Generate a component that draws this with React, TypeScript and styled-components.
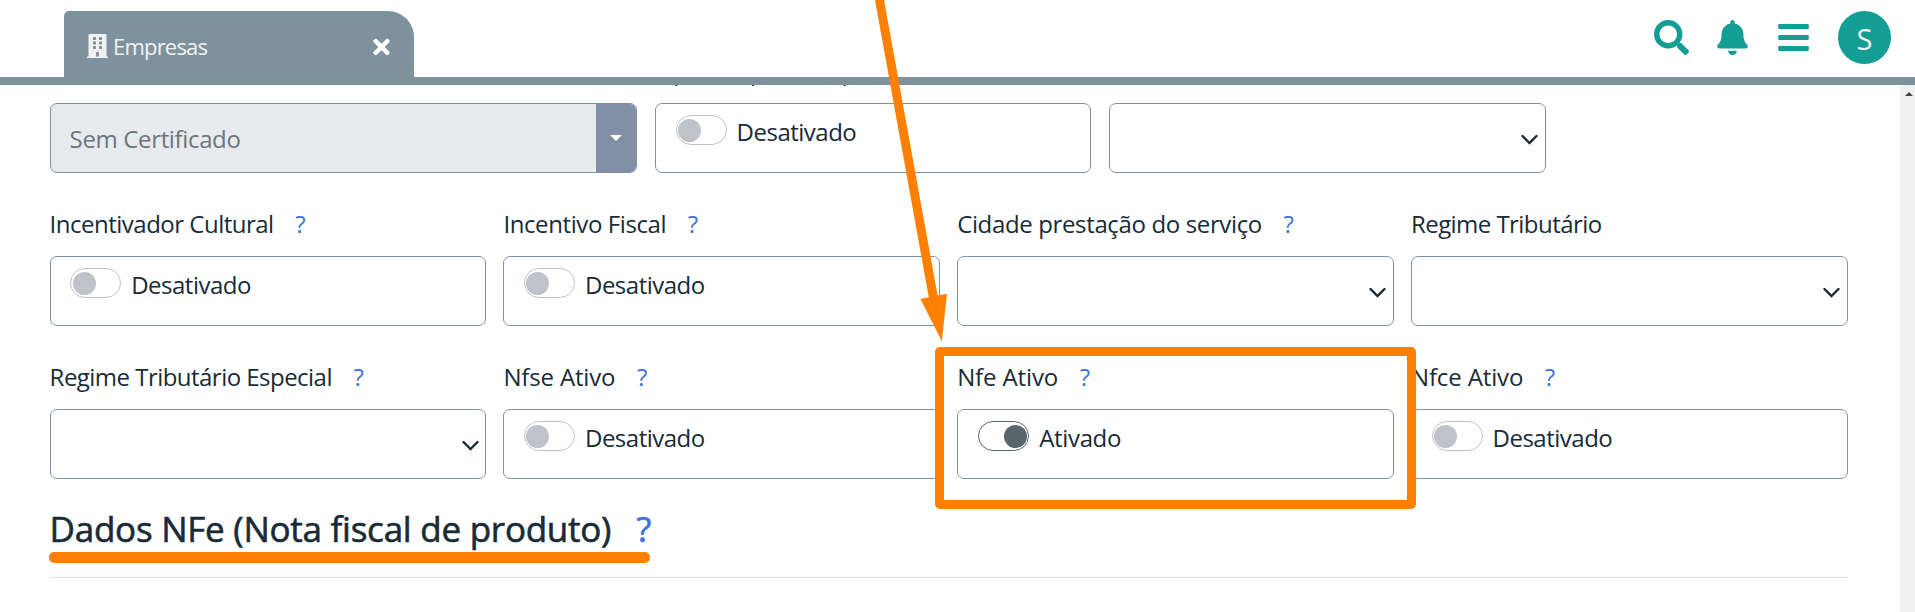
import React from 'react';
import styled, { createGlobalStyle } from 'styled-components';
import { FaBars, FaBell, FaBuilding, FaSearch, FaTimes } from 'react-icons/fa';

const slate = '#7e929d';
const teal = '#139e95';
const ink = '#182b37';
const outline = '#828fa7';
const orange = '#ff8000';

const GlobalStyle = createGlobalStyle`
  * { box-sizing: border-box; }
  body {
    margin: 0;
    background: #fff;
    color: ${ink};
    font-family: 'Open Sans', 'Noto Sans', sans-serif;
    overflow: hidden;
  }
`;

const Page = styled.div`
  position: relative;
  display: flex;
  flex-direction: column;
  width: 1915px;
  height: 612px;
  overflow: hidden;
`;

const Header = styled.header`
  display: flex;
  justify-content: space-between;
  height: 85px;
  padding: 11px 24px 0 64px;
  border-bottom: 8px solid ${slate};
  flex: none;
`;

const Tab = styled.div`
  display: flex;
  align-items: center;
  width: 350px;
  height: 66px;
  padding: 5px 24px 0 23px;
  border-radius: 5px 26px 0 0;
  background: ${slate};
  color: #f1f1f1;
`;

const TabTitle = styled.span`
  flex: 1;
  margin: -2px 0 0 5px;
  font-size: 22px;
  line-height: 30px;
  letter-spacing: -0.8px;
`;

const BuildingIcon = styled(FaBuilding)`
  width: 21px;
  height: 24px;
  margin-top: -1px;
`;

const CloseIcon = styled(FaTimes)`
  width: 17px;
  height: 24px;
  margin-top: 1px;
  color: #fff;
`;

const Actions = styled.nav`
  display: flex;
  height: 53px;
  align-items: center;
  color: ${teal};
`;

const Search = styled(FaSearch)`
  width: 35px;
  height: 35px;
  margin-right: 28px;
`;

const Bell = styled(FaBell)`
  width: 31px;
  height: 35px;
  margin-right: 30px;
`;

const Menu = styled(FaBars)`
  width: 31px;
  height: 35px;
  margin-right: 29px;
`;

const Avatar = styled.div`
  width: 53px;
  height: 53px;
  border-radius: 50%;
  background: ${teal};
  color: #f1f1f1;
  font-size: 29px;
  line-height: 55px;
  text-align: center;
`;

const Body = styled.div`
  display: flex;
  height: 527px;
  overflow: hidden;
`;

const Form = styled.main`
  flex: 1;
  padding: 0 52.2px 0 49.6px;
  overflow: hidden;
`;

const Rows = styled.div`
  margin-top: -35px;
`;

const Row = styled.div<{ $columns: string; $gap: number }>`
  display: grid;
  grid-template-columns: ${(p) => p.$columns};
  column-gap: ${(p) => p.$gap}px;
  height: 153px;
`;

const Label = styled.div`
  display: flex;
  height: 53px;
  padding-top: 1px;
  font-size: 24px;
  line-height: 40px;
  white-space: nowrap;
`;

const LabelText = styled.span<{ $track: number }>`
  letter-spacing: ${(p) => p.$track}px;
`;

const Help = styled.span`
  margin-left: 21.5px;
  color: #3f75d6;
`;

const Box = styled.div`
  display: flex;
  height: 70px;
  border: 1px solid ${outline};
  border-radius: 7px;
  background: #fff;
  overflow: hidden;
`;

const ToggleBox = styled(Box)`
  padding: 11px 0 0 19.6px;
`;

const SelectBox = styled(Box)`
  align-items: center;
  justify-content: flex-end;
  padding: 3px 6.5px 0 0;
`;

const DisabledBox = styled(Box)`
  background: #e8ebee;
  color: #6c757d;
`;

const DisabledValue = styled.span`
  flex: 1;
  padding-left: 19px;
  font-size: 24px;
  line-height: 69px;
  letter-spacing: -0.35px;
`;

const DropButton = styled.div`
  display: flex;
  align-items: center;
  justify-content: center;
  width: 40px;
  background: ${outline};
`;

const Caret = styled.div`
  border: 6px solid transparent;
  border-top-color: #fff;
  border-bottom: 0;
`;

const Switch = styled.div<{ $on: boolean }>`
  display: flex;
  align-items: center;
  justify-content: ${(p) => (p.$on ? 'flex-end' : 'flex-start')};
  width: 51px;
  height: 30px;
  padding: 0 ${(p) => (p.$on ? 0.5 : 1.5)}px;
  border: 1px solid ${(p) => (p.$on ? '#5a666d' : '#bdc3c8')};
  border-radius: 15px;
  background: #fff;
`;

const Knob = styled.div<{ $on: boolean }>`
  width: 23px;
  height: 23px;
  border-radius: 50%;
  background: ${(p) => (p.$on ? '#5a666d' : '#bdc3c8')};
`;

const SwitchText = styled.span<{ $on: boolean }>`
  margin-left: ${(p) => (p.$on ? 10.5 : 10)}px;
  font-size: 24px;
  line-height: 33px;
  letter-spacing: ${(p) => (p.$on ? -0.35 : -0.5)}px;
`;

const SectionTitle = styled.h2`
  display: flex;
  height: 68px;
  margin: 0;
  font-size: 35px;
  font-weight: 500;
  line-height: 39px;
  white-space: nowrap;
  -webkit-text-stroke: 0.6px;
`;

const TitleHelp = styled(Help)`
  margin-left: 25px;
`;

const Rule = styled.div`
  height: 1px;
  background: #dfe1e3;
`;

const ScrollTrack = styled.div`
  display: flex;
  justify-content: center;
  width: 15px;
  padding: 7px 0 0 2px;
  background: #f0f0f0;
`;

const ScrollUp = styled.div`
  width: 0;
  height: 0;
  border: 4px solid transparent;
  border-bottom-color: #444;
  border-top: 0;
`;

const Highlight = styled.div`
  position: absolute;
  left: 935px;
  top: 347px;
  width: 481px;
  height: 162px;
  border: 9px solid ${orange};
  border-radius: 5px;
`;

const Underline = styled.div`
  position: absolute;
  left: 49px;
  top: 552px;
  width: 601px;
  height: 11px;
  border-radius: 5px;
  background: ${orange};
`;

const Arrow = styled.svg`
  position: absolute;
  left: 860px;
  top: 0;
`;

type FieldProps = {
  label?: string;
  track?: number;
  help?: boolean;
  kind: 'toggle' | 'select' | 'disabled';
  on?: boolean;
};

function Field({ label, track = -0.5, help = true, kind, on = false }: FieldProps) {
  return (
    <div>
      <Label>
        {label && <LabelText $track={track}>{label}</LabelText>}
        {label && help && <Help>?</Help>}
      </Label>
      {kind === 'toggle' && (
        <ToggleBox>
          <Switch $on={on}>
            <Knob $on={on} />
          </Switch>
          <SwitchText $on={on}>{on ? 'Ativado' : 'Desativado'}</SwitchText>
        </ToggleBox>
      )}
      {kind === 'select' && (
        <SelectBox>
          <svg width="17" height="12" viewBox="0 0 17 12" fill="none" stroke={ink} strokeWidth="2.4">
            <path d="M1.5 2 L8.5 9 L15.5 2" strokeLinecap="round" />
          </svg>
        </SelectBox>
      )}
      {kind === 'disabled' && (
        <DisabledBox>
          <DisabledValue>Sem Certificado</DisabledValue>
          <DropButton>
            <Caret />
          </DropButton>
        </DisabledBox>
      )}
    </div>
  );
}

const quarters = 'repeat(4, 436.6px)';

export default function App() {
  return (
    <Page>
      <GlobalStyle />
      <Header>
        <Tab>
          <BuildingIcon />
          <TabTitle>Empresas</TabTitle>
          <CloseIcon />
        </Tab>
        <Actions>
          <Search />
          <Bell />
          <Menu />
          <Avatar>S</Avatar>
        </Actions>
      </Header>
      <Body>
        <Form>
          <Rows>
            <Row $columns="587.4px 436.4px 436.4px" $gap={18}>
              <Field kind="disabled" />
              <Field label="Optante pelo simples" track={-0.4} help={false} kind="toggle" />
              <Field kind="select" />
            </Row>
            <Row $columns={quarters} $gap={17.2}>
              <Field label="Incentivador Cultural" kind="toggle" />
              <Field label="Incentivo Fiscal" track={-0.4} kind="toggle" />
              <Field label="Cidade prestação do serviço" track={-0.36} kind="select" />
              <Field label="Regime Tributário" track={-0.55} help={false} kind="select" />
            </Row>
            <Row $columns={quarters} $gap={17.2}>
              <Field label="Regime Tributário Especial" track={-0.53} kind="select" />
              <Field label="Nfse Ativo" track={-0.15} kind="toggle" />
              <Field label="Nfe Ativo" track={-0.12} kind="toggle" on />
              <Field label="Nfce Ativo" track={-0.12} kind="toggle" />
            </Row>
          </Rows>
          <SectionTitle>
            <LabelText $track={-0.25}>Dados NFe (Nota fiscal de produto)</LabelText>
            <TitleHelp>?</TitleHelp>
          </SectionTitle>
          <Rule />
        </Form>
        <ScrollTrack>
          <ScrollUp />
        </ScrollTrack>
      </Body>
      <Highlight />
      <Underline />
      <Arrow width="100" height="345" viewBox="860 0 100 345" fill={orange}>
        <path d="M875 0 H884 L937.6 295.5 L947 293.7 L941.8 341 L920.4 299 L928.8 297.3 Z" />
      </Arrow>
    </Page>
  );
}
